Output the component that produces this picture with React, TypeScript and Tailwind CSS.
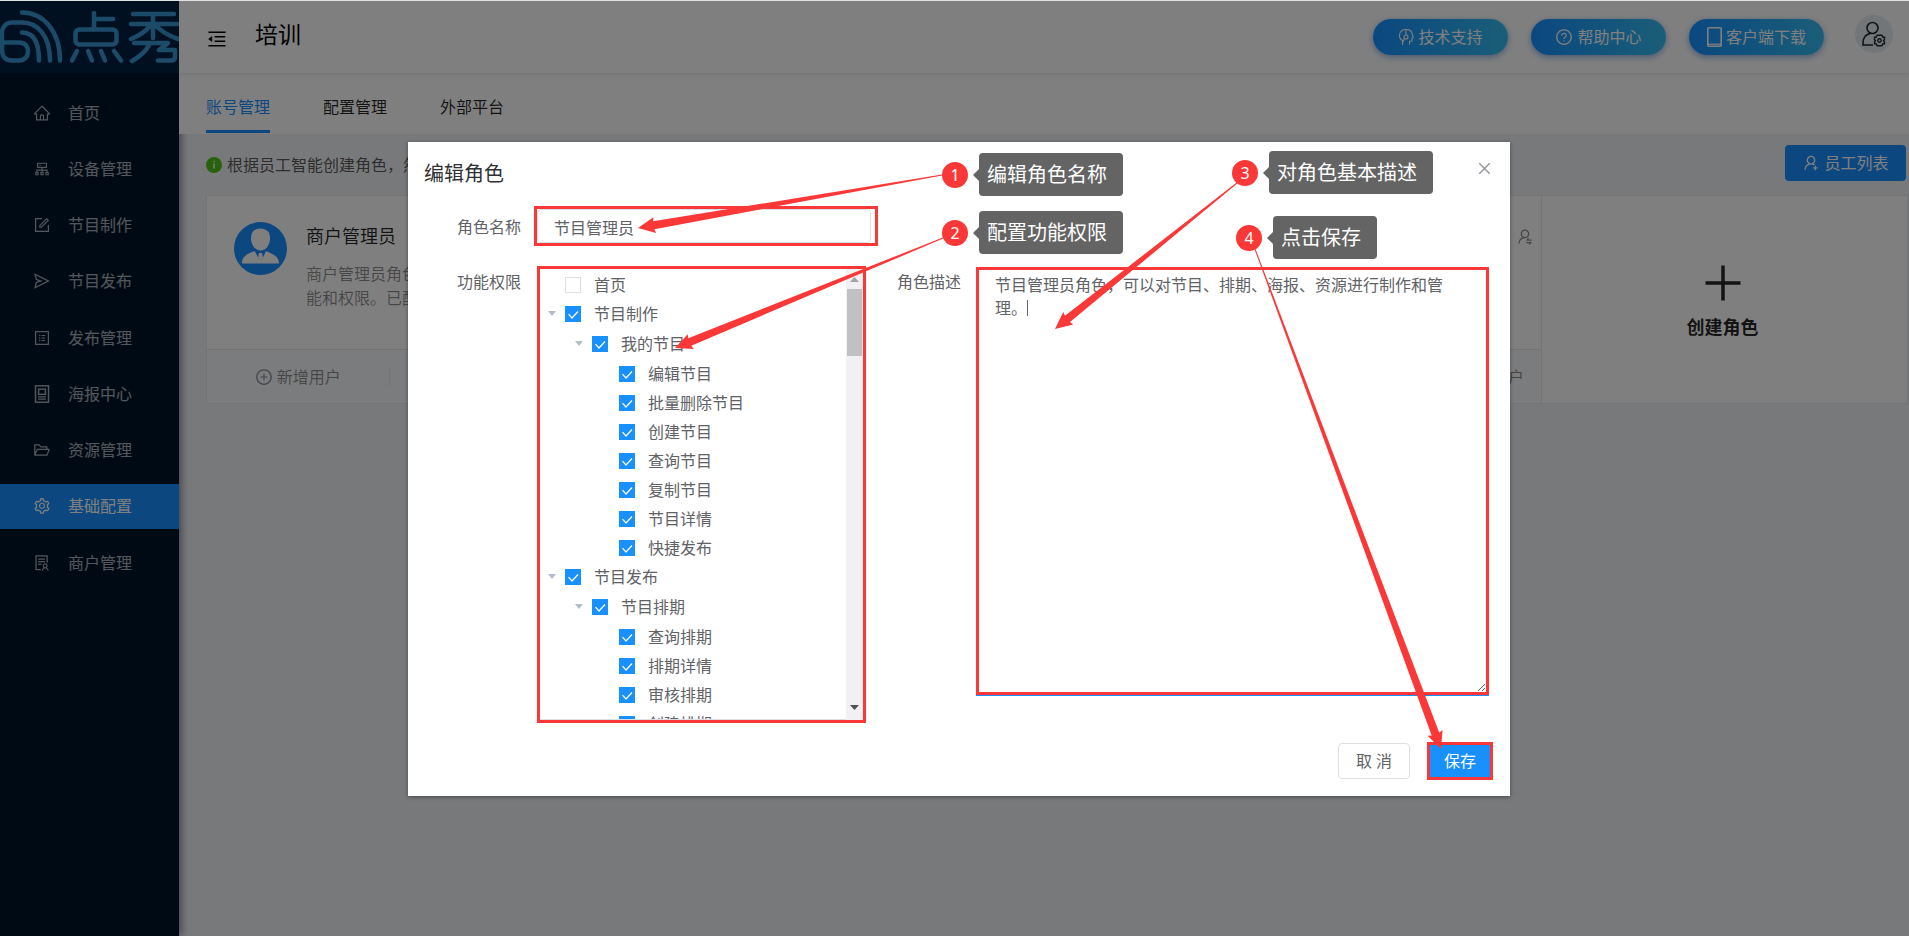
import React from "react";
import type { IconType } from "react-icons";
import {
  AiOutlineClose,
  AiOutlineCluster,
  AiOutlineFolderOpen,
  AiOutlineForm,
  AiOutlineHome,
  AiOutlineMenuFold,
  AiOutlinePlusCircle,
  AiOutlineProfile,
  AiOutlineQuestionCircle,
  AiOutlineSend,
  AiOutlineSetting,
  AiOutlineSolution,
  AiOutlineTablet,
  AiOutlineUserAdd,
  AiOutlineUserSwitch,
} from "react-icons/ai";

function PosterIcon({ className }: { className?: string }) {
  return (
    <svg viewBox="0 0 16 16" className={className} width="1em" height="1em" fill="none" stroke="currentColor" aria-hidden="true">
      <rect x="2.2" y="0.7" width="11.6" height="14.6" strokeWidth="1.3" />
      <rect x="5" y="3.7" width="6" height="4.600" strokeWidth="1.3" />
      <path d="M4.500 10.600h7M4.500 12.600h7" strokeWidth="1.2" />
    </svg>
  );
}

const menu: { label: string; icon: IconType | typeof PosterIcon; active?: boolean }[] = [
  { label: "首页", icon: AiOutlineHome },
  { label: "设备管理", icon: AiOutlineCluster },
  { label: "节目制作", icon: AiOutlineForm },
  { label: "节目发布", icon: AiOutlineSend },
  { label: "发布管理", icon: AiOutlineProfile },
  { label: "海报中心", icon: PosterIcon },
  { label: "资源管理", icon: AiOutlineFolderOpen },
  { label: "基础配置", icon: AiOutlineSetting, active: true },
  { label: "商户管理", icon: AiOutlineSolution },
];

function Logo() {
  return (
    <svg viewBox="0 0 179 73" className="h-[73px] w-full" role="img" aria-label="点秀" fill="none" stroke="#3897d3" strokeWidth="4.500" strokeLinecap="round" strokeLinejoin="round">
      <path d="M22 12.500C43 12.500 60 31 60 60.500" />
      <path d="M22 22.500C38 22.500 50 36 50 60.500M22 22.500H12C6 22.500 2 27 2 33V50C2 57 6 60.500 12 60.500H19C25 60.500 28 56 28 51.500C28 46 25 42.500 19 42.500H3" />
      <path d="M22 32.500C33 32.500 39 42 39 60.500" />
      <path d="M94 13V29M94 19H113" />
      <rect x="75.500" y="29.500" width="41" height="15" rx="4" />
      <path d="M77 51L72 60.500M88 51L92 60.500M101 51L105 60.500M114 51L121 60.500" />
      <path d="M133 14H174M131 24H178M153 14V38M151 25C146 31 139 36 131 39M155 25C161 31 169 36 178 39M134 43H168L159 50H175V57Q175 60.500 171 60.500H158M149 45C146 51 139 57 132 61" />
    </svg>
  );
}

function Sidebar() {
  return (
    <aside className="flex w-[179px] shrink-0 flex-col bg-[#001529] shadow-[2px_0_8px_rgba(0,21,41,0.5)]">
      <div className="bg-[#002140]"><Logo /></div>
      <nav className="mt-[17px] flex h-[495px] flex-col justify-between">
        {menu.map(({ label, icon: Icon, active }) => (
          <a
            key={label}
            href="#"
            className={`flex h-[45px] items-center gap-[17px] pl-[33px] text-base ${active ? "bg-[#1890ff] text-white" : "text-white/65"}`}
          >
            <Icon className="size-[18px]" />
            {label}
          </a>
        ))}
      </nav>
    </aside>
  );
}

function BrainIcon() {
  return (
    <svg viewBox="0 0 16 18" className="h-[18px] w-4" fill="none" stroke="currentColor" strokeWidth="1.100" aria-hidden="true">
      <path d="M4.500 17v-4.500C2.500 11.500 1.200 9.500 1.500 7 2 3.500 4.500 1.500 8 1.500s6 2 6.300 5l.9 3-1.200 1V13l-2.500.3V16.500" />
      <circle cx="8" cy="9" r="2" />
      <path d="M8 1.500v5.500M6.500 10.500 5 14" />
    </svg>
  );
}

const pill =
  "flex h-9 w-[135px] items-center justify-center gap-1 rounded-full bg-linear-to-r from-[#1890ff] to-[#36bcf0] text-base text-white shadow-[0_2px_6px_rgba(24,100,200,0.5)]";

function Header() {
  return (
    <header className="relative flex h-[73px] items-center bg-white pr-4 pl-[27px] shadow-[0_1px_4px_rgba(0,21,41,0.12)]">
      <button aria-label="收起菜单" className="pt-1 text-[22px] text-black"><AiOutlineMenuFold /></button>
      <h1 className="pb-1 pl-[27px] text-[23px] text-black">培训</h1>
      <div className="ml-auto flex items-center gap-[23px]">
        <button className={pill}><BrainIcon />技术支持</button>
        <button className={pill}><AiOutlineQuestionCircle className="size-[18px]" />帮助中心</button>
        <button className={pill}>
          <svg viewBox="0 0 15 20" className="h-5 w-[15px]" fill="none" stroke="currentColor" strokeWidth="1.600" aria-hidden="true">
            <rect x="0.8" y="0.8" width="13.4" height="18.400" rx="1" />
            <path d="M1 17.200h13" strokeWidth="1.200" />
          </svg>
          客户端下载
        </button>
      </div>
      <button aria-label="个人设置" className="mb-1.5 ml-[31px] flex size-[38px] items-center justify-center rounded-full bg-[#e6edf2] text-black/85">
        <svg viewBox="0 0 24 26" className="h-[26px] w-6" fill="none" stroke="currentColor" strokeWidth="1.600" aria-hidden="true">
          <circle cx="10.500" cy="7" r="5.500" />
          <path d="M11 24H1V22C1 17 4 13.500 8 12.500" />
          <path d="M15.200 14.200h4.600l1.200 2h1.500v2.300l-1 1.200 1 1.200v1.800h-1.500l-1.200 2h-4.600l-1.200-2h-1.500v-1.800l1-1.200-1-1.200v-2.300h1.500z" strokeWidth="1.400" />
          <circle cx="17.500" cy="19.500" r="1.700" strokeWidth="1.400" />
        </svg>
      </button>
    </header>
  );
}

function Tabs() {
  return (
    <nav className="flex h-[61px] items-stretch bg-white pl-[27px] text-base text-black/85">
      <a href="#" className="mr-[53px] mb-px border-b-[3px] border-[#1890ff] pt-[22px] text-[#1890ff]">账号管理</a>
      <a href="#" className="mr-[53px] pt-[22px]">配置管理</a>
      <a href="#" className="pt-[22px]">外部平台</a>
    </nav>
  );
}

function RoleAvatar() {
  return (
    <svg viewBox="0 0 53 53" className="size-[53px] shrink-0" aria-hidden="true">
      <circle cx="26.500" cy="26.500" r="26.500" fill="#1890ff" />
      <path d="M26.500 6.500c6 0 9.500 3.500 9.500 9.500 0 7-4 12.500-9.500 12.500S17 23 17 16c0-6 3.500-9.500 9.500-9.500z" fill="#fff" />
      <path d="M8 41.500c0-6 3-9 12.500-12.500L26 37l5.500-8C41 32.500 45 35.500 45 41.500z" fill="#fff" />
      <path d="M21 29l5.500 3 5.500-3-4 8.500h-3z" fill="#1890ff" />
      <path d="M25 31h3l1 5-2.500 3-2.500-3z" fill="#fff" />
    </svg>
  );
}

function RoleCards() {
  return (
    <div className="flex h-[209px] text-base text-black/45">
      <article className="flex w-[366px] flex-col border border-[#e8e8e8] bg-white">
        <div className="flex flex-1 gap-[19px] pt-[26px] pr-[22px] pl-[27px]">
          <RoleAvatar />
          <div>
            <h2 className="text-lg text-black/85">商户管理员</h2>
            <p className="pt-3 leading-6">商户管理员角色，拥有系统所有功能和权限。已配置全部菜单</p>
          </div>
        </div>
        <div className="flex h-[54px] items-center border-t border-[#e8e8e8] bg-[#f7f9fa]">
          <button className="flex h-[18px] flex-1 items-center justify-center gap-1 border-r border-[#e8e8e8]">
            <AiOutlinePlusCircle className="size-[18px]" />新增用户
          </button>
          <button className="flex-1">查看用户</button>
        </div>
      </article>
      <article className="ml-auto flex w-[366px] flex-col border-y border-l border-[#e8e8e8] bg-white">
        <div className="flex flex-1 items-start justify-end pt-8 pr-[7px]">
          <button aria-label="切换用户"><AiOutlineUserSwitch className="size-[18px]" /></button>
        </div>
        <div className="flex h-[54px] items-center justify-end border-t border-[#e8e8e8] bg-[#f7f9fa] pr-[17px]">
          <button>查看用户</button>
        </div>
      </article>
      <button className="flex w-[367px] flex-col items-center justify-center gap-3 border border-[#e8e8e8] bg-white pt-[6px] pr-1 text-lg font-bold text-black/85">
        <svg viewBox="0 0 36 36" className="size-9" stroke="currentColor" strokeWidth="3.500" aria-hidden="true">
          <path d="M18 0.500V35.500M0.500 18H35.500" />
        </svg>
        创建角色
      </button>
    </div>
  );
}

type Node = { label: string; unchecked?: boolean; children?: Node[] };

const tree: Node[] = [
  { label: "首页", unchecked: true },
  {
    label: "节目制作",
    children: [
      {
        label: "我的节目",
        children: ["编辑节目", "批量删除节目", "创建节目", "查询节目", "复制节目", "节目详情", "快捷发布"].map((label) => ({ label })),
      },
    ],
  },
  {
    label: "节目发布",
    children: [
      { label: "节目排期", children: ["查询排期", "排期详情", "审核排期", "创建排期"].map((label) => ({ label })) },
    ],
  },
];

function TreeList({ nodes, nested }: { nodes: Node[]; nested?: boolean }) {
  return (
    <ul className={nested ? "pt-px pl-[27px]" : ""}>
      {nodes.map((node) => (
        <li key={node.label}>
          <div className="flex h-[29px] items-center">
            <span className="flex w-[18px] shrink-0 justify-center pr-2">
              {node.children && (
                <svg viewBox="0 0 8 5" className="h-[5px] w-2 shrink-0" fill="#b4bccc" aria-hidden="true"><path d="M0 0h8L4 5z" /></svg>
              )}
            </span>
            <label className="flex items-center gap-[13px]">
              <span className="relative flex size-4">
                <input
                  type="checkbox"
                  defaultChecked={!node.unchecked}
                  className="size-4 appearance-none border border-[#dcdfe6] bg-white checked:border-[#1890ff] checked:bg-[#1890ff]"
                />
                {!node.unchecked && (
                  <svg viewBox="0 0 16 16" className="pointer-events-none absolute inset-0 size-4" fill="none" stroke="#fff" strokeWidth="1.200" aria-hidden="true">
                    <path d="M3.500 8.200 7 12l6-6.500" />
                  </svg>
                )}
              </span>
              {node.label}
            </label>
          </div>
          {node.children && <TreeList nodes={node.children} nested />}
        </li>
      ))}
    </ul>
  );
}

function Scrollbar() {
  return (
    <div className="flex w-[17px] shrink-0 flex-col items-center bg-[#f1f1f1] pt-[8px] pb-[10px]" aria-hidden="true">
      <svg viewBox="0 0 9 5" className="h-[5px] w-[9px]" fill="#a3a3a3"><path d="M0 5h9L4.500 0z" /></svg>
      <div className="mt-[7px] h-[67px] w-[15px] bg-[#c1c1c1]" />
      <svg viewBox="0 0 9 5" className="mt-auto h-[5px] w-[9px]" fill="#505050"><path d="M0 0h9L4.500 5z" /></svg>
    </div>
  );
}

function EditRoleDialog() {
  return (
    <section role="dialog" aria-labelledby="dialog-title" className="h-fit w-[1102px] bg-white pb-4 text-base text-[#606266] shadow-[0_1px_4px_rgba(0,0,0,0.4)]">
      <header className="flex h-16 items-center justify-between pr-[17px] pl-4">
        <h2 id="dialog-title" className="text-xl text-[#303133]">编辑角色</h2>
        <button aria-label="关闭" className="pb-3 text-[#909399]"><AiOutlineClose className="size-[17px]" /></button>
      </header>
      <div className="flex items-start pl-[49px]">
        <label htmlFor="role-name" className="w-[77px] pt-[9px]">角色名称</label>
        <div className="h-10 w-[344px] border-[3px] border-[#fb3838] pr-1">
          <input id="role-name" defaultValue="节目管理员" className="h-full w-full rounded border border-[#dcdfe6] px-4 pt-[2px] outline-none" />
        </div>
      </div>
      <div className="flex items-start pt-5 pl-[49px]">
        <span className="w-20 pt-1">功能权限</span>
        <div className="flex h-[457px] w-[329px] overflow-hidden border-[3px] border-[#fb3838]">
          <div className="min-w-0 flex-1 overflow-hidden border-b border-[#dcdfe6] pt-px pl-[7px]">
            <TreeList nodes={tree} />
          </div>
          <Scrollbar />
        </div>
        <label htmlFor="role-desc" className="ml-[31px] w-[79px] pt-1">角色描述</label>
        <div className="relative mt-px h-[429px] w-[513px] border-b border-[#1890ff]">
          <textarea
            id="role-desc"
            defaultValue="节目管理员角色，可以对节目、排期、海报、资源进行制作和管理。"
            className="block h-full w-full border-[3px] border-[#fb3838] py-1 pr-10 pl-4 leading-[23px] outline-none"
          />
          <span className="absolute top-[33px] left-[51px] h-4 w-px bg-[#606266]" />
        </div>
      </div>
      <footer className="flex items-center justify-end gap-[17px] pt-[19px] pr-[17px]">
        <button className="h-9 w-[72px] rounded border border-[#dcdfe6] bg-white">取 消</button>
        <button className="h-[38px] w-[66px] border-[3px] border-[#fb3838] bg-[#1890ff] text-white">保存</button>
      </footer>
    </section>
  );
}

type Point = [number, number];
const arrows: { from: Point; to: Point }[] = [
  { from: [942, 175], to: [638, 228] },
  { from: [943, 238], to: [675, 348] },
  { from: [1237, 183], to: [1055, 329] },
  { from: [1255, 249], to: [1441, 749] },
];

function arrowPoints({ from, to }: { from: Point; to: Point }) {
  const dx = to[0] - from[0];
  const dy = to[1] - from[1];
  const len = Math.hypot(dx, dy);
  const [ux, uy] = [dx / len, dy / len];
  const at = (along: number, side: number) => `${from[0] + ux * along - uy * side},${from[1] + uy * along + ux * side}`;
  return [at(0, -0.5), at(len - 16, -4), at(len - 17, -8), at(len, 0), at(len - 17, 8), at(len - 16, 4), at(0, 0.5)].join(" ");
}

const steps = [
  { n: 1, label: "编辑角色名称", place: "left-[942px] top-[153px]" },
  { n: 2, label: "配置功能权限", place: "left-[942px] top-[211px]" },
  { n: 3, label: "对角色基本描述", place: "left-[1232px] top-[151px]" },
  { n: 4, label: "点击保存", place: "left-[1236px] top-[216px]" },
];

function Annotations() {
  return (
    <div className="pointer-events-none absolute inset-0">
      <svg className="absolute inset-0 h-full w-full" fill="#fb3838" aria-hidden="true">
        {arrows.map((a) => <polygon key={a.from.join()} points={arrowPoints(a)} />)}
      </svg>
      {steps.map(({ n, label, place }) => (
        <div key={n} className={`absolute flex items-center ${place}`}>
          <span className="flex size-[26px] items-center justify-center rounded-full bg-[#fb3838] text-base leading-none text-white">{n}</span>
          <svg viewBox="0 0 6 12" className="ml-[5px] h-3 w-[6px]" fill="#646464" aria-hidden="true"><path d="M6 0v12L0 6z" /></svg>
          <span className="flex h-[43px] items-center rounded bg-[#646464] pr-4 pl-2 text-xl text-white">{label}</span>
        </div>
      ))}
    </div>
  );
}

export default function App() {
  return (
    <div className="relative flex min-h-screen overflow-hidden bg-[#f0f2f5] font-['Noto_Sans','Noto_Sans_CJK_SC',sans-serif]">
      <Sidebar />
      <div className="flex min-w-0 flex-1 flex-col">
        <Header />
        <Tabs />
        <main className="pr-px pl-[27px]">
          <div className="flex h-[61px] items-center justify-between pr-[2px]">
            <p className="flex items-center gap-[5px] text-base text-black/65">
              <svg viewBox="0 0 16 16" className="size-4" aria-hidden="true">
                <circle cx="8" cy="8" r="8" fill="#52c41a" />
                <path d="M8 6.500v5M8 3.800v1.500" stroke="#fff" strokeWidth="1.400" />
              </svg>
              根据员工智能创建角色，然后分配功能权限
            </p>
            <button className="mb-1 flex h-9 w-[121px] items-center justify-center gap-1 rounded bg-[#1890ff] text-base text-white">
              <AiOutlineUserAdd className="size-[18px]" />员工列表
            </button>
          </div>
          <RoleCards />
        </main>
      </div>
      <div className="absolute inset-0 flex justify-center border-t border-[#dfe3e3] bg-black/50 pt-[141px] pl-[9px]">
        <EditRoleDialog />
      </div>
      <Annotations />
    </div>
  );
}
